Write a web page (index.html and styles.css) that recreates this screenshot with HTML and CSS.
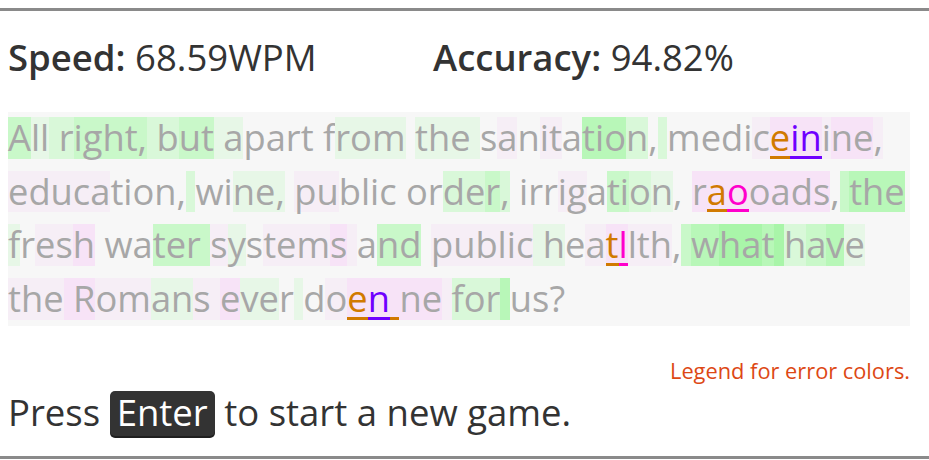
FILE: index.html
```html
<!DOCTYPE html>
<html lang="en">
<head>
<meta charset="utf-8">
<title>Typing game</title>
<link rel="stylesheet" href="styles.css">
</head>
<body>
<hr class="rule">
<main class="main">
  <div class="stats">
    <div class="stat stat-speed"><b>Speed:</b> 68.59WPM</div>
    <div class="stat"><b>Accuracy:</b> 94.82%</div>
  </div>
  <div class="text-box">
    <div class="line"><span class="g3">A</span><span class="g1">ll</span><span class="g2"> r</span><span class="g3">ight,</span><span class="g2"> b</span><span class="g3">ut</span><span class="g1"> a</span>part f<span class="g1">rom</span> <span class="g1">the </span>s<span class="p1">a</span>n<span class="p1">it</span>a<span class="g4">tio</span><span class="g2">n</span>,<span class="g2"> </span>medi<span class="p1">c</span><span class="p2 eo">e</span><span class="p2 ep">in</span><span class="p1">i</span><span class="p2">ne</span><span class="p1">,</span></div>
    <div class="line"><span class="p1">educa</span>tion,<span class="g2"> </span>wi<span class="g1">ne,</span> <span class="p1">pu</span>blic or<span class="g2">de</span><span class="g3">r</span><span class="g2">,</span> irr<span class="p1">ig</span>a<span class="g3">ti</span><span class="g2">o</span><span class="g1">n</span>, <span class="p2">r</span><span class="p2 eo">a</span><span class="p2 em">o</span><span class="p2">oads</span>,<span class="g3"> </span><span class="g4">the</span></div>
    <div class="line"><span class="g1">f</span>r<span class="p1">es</span><span class="p2">h</span> wa<span class="g3">ter </span><span class="p1">s</span><span class="g1">y</span>s<span class="p1">tem</span><span class="p2">s</span><span class="p1"> </span>a<span class="g3">nd</span> <span class="p1">public</span><span class="g1"> h</span>e<span class="p1">a</span><span class="p2 eo">t</span><span class="p2 em">l</span><span class="p1">lth</span>,<span class="g3"> </span><span class="g4">w</span><span class="g5">ha</span><span class="g4">t</span><span class="g5"> </span><span class="g2">h</span><span class="g3">a</span><span class="g4">v</span><span class="g1">e</span></div>
    <div class="line"><span class="p1">the</span><span class="p2"> R</span><span class="p1">om</span><span class="g1">an</span><span class="p1">s </span><span class="p2">e</span><span class="g1">ve</span>r<span class="g1"> </span>d<span class="p1">o</span><span class="p2 eo">e</span><span class="p2 ep">n</span><span class="p2 eo"> </span><span class="p2">ne</span><span class="p1"> </span><span class="g2">for</span><span class="g4"> </span>us?</div>
  </div>
  <p class="legend">Legend for error colors.</p>
  <p class="prompt">Press <kbd class="key">Enter</kbd> to start a new game.</p>
</main>
<hr class="rule rule-bottom">
</body>
</html>
```
FILE: styles.css
```css
html, body {
  margin: 0;
  padding: 0;
  background: #ffffff;
}

body {
  padding-top: 8px;
  font-family: "Open Sans", "Noto Sans", sans-serif;
  color: #333333;
}

.rule {
  margin: 0;
  border: 0;
  height: 3px;
  background: #8a8a8a;
}

.rule-bottom {
  margin-top: 20px;
}

.main {
  width: 902px;
  margin-left: 8px;
}

.stats {
  display: flex;
  margin-top: 25px;
  font-size: 36.5px;
  line-height: 42px;
}

.stat b {
  font-weight: 600;
}

.stat-speed {
  width: 425px;
}

.text-box {
  margin-top: 34px;
  background: #f7f7f7;
  padding: 5px 0 6px;
  display: flex;
  flex-direction: column;
  gap: 12px;
  color: #a7a7a7;
  font-size: 36.3px;
}

.line {
  white-space: pre;
  height: 41.7px;
  line-height: 41.7px;
}

.line span {
  display: inline-block;
  height: 41.7px;
  vertical-align: top;
}

.g1 { background: #e7f7e7; }
.g2 { background: #d9f8d9; }
.g3 { background: #c9f8c9; }
.g4 { background: #b8f7b8; }
.g5 { background: #a9f5a9; }
.p1 { background: #f6eef6; }
.p2 { background: #f7e3f7; }

.eo {
  color: #d17a00;
  box-shadow: inset 0 -3px 0 #d17a00;
}

.ep {
  color: #6f00ff;
  box-shadow: inset 0 -3px 0 #6f00ff;
}

.em {
  color: #ff00cc;
  box-shadow: inset 0 -3px 0 #ff00cc;
}

.legend {
  margin: 33px 0 0;
  text-align: right;
  font-size: 21.8px;
  line-height: 24px;
  color: #dd4814;
}

.prompt {
  margin: 8px 0 0;
  font-size: 36.5px;
  line-height: 42px;
}

.key {
  display: inline-block;
  font-family: "Open Sans", "Noto Sans", sans-serif;
  font-size: 36.5px;
  line-height: 38px;
  padding: 2px 7px 5px;
  background: #333333;
  color: #ffffff;
  border-radius: 5px;
  box-shadow: 0 2px 0 #1f1f1f;
}
```
